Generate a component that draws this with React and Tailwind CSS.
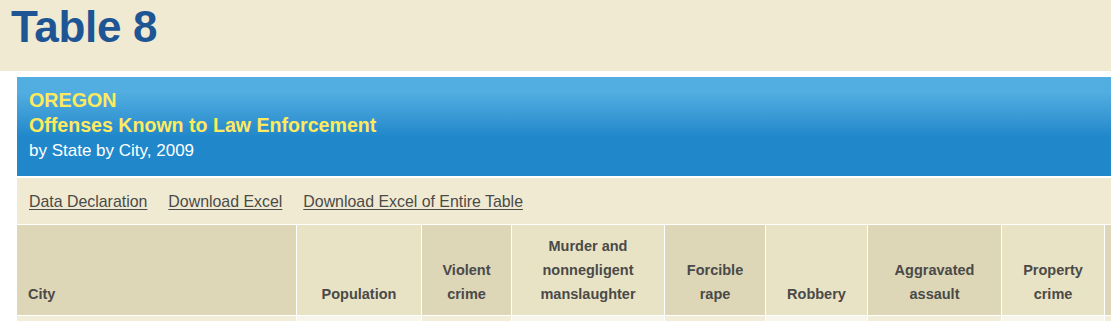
import React from "react";

// Column headings of the table, in order. "dark" = shaded column
const columns = [
  { key: "city", label: ["City"], width: "w-[279px]", dark: true, left: true },
  { key: "population", label: ["Population"], width: "w-[124px]", dark: false },
  { key: "violent", label: ["Violent", "crime"], width: "w-[89px]", dark: true },
  { key: "murder", label: ["Murder and", "nonnegligent", "manslaughter"], width: "w-[152px]", dark: false },
  { key: "rape", label: ["Forcible", "rape"], width: "w-[100px]", dark: true },
  { key: "robbery", label: ["Robbery"], width: "w-[101px]", dark: false },
  { key: "assault", label: ["Aggravated", "assault"], width: "w-[133px]", dark: true },
  { key: "property", label: ["Property", "crime"], width: "w-[102px]", dark: false },
  // next column only peeks in at the right edge
  { key: "more", label: [], width: "w-[100px]", dark: true },
];

const links = ["Data Declaration", "Download Excel", "Download Excel of Entire Table"];

const App = () => {
  return (
    <div className="h-screen w-full overflow-hidden bg-white font-['Liberation_Sans',Arial,sans-serif]">
      {/* page title band */}
      <div className="h-[71px] bg-[#f0ead3] pl-[11px] pt-[5px]">
        <h1 className="text-[44px] leading-[44px] font-bold tracking-[-0.3px] text-[#1e5594]">
          Table 8
        </h1>
      </div>

      <div className="pl-[17px] pt-[6px]">
        {/* blue caption */}
        <div className="bg-linear-to-b from-[#52aee1] from-15% to-[#2088ca] to-60% pl-[12px] pt-[11px] pb-[13px]">
          <div className="text-[19.7px] leading-[25px] font-bold text-[#ffea5e]">OREGON</div>
          <div className="text-[19.6px] leading-[25px] font-bold text-[#ffea5e]">
            Offenses Known to Law Enforcement
          </div>
          <div className="text-[17px] leading-[25px] text-white">by State by City, 2009</div>
        </div>

        {/* download links */}
        <div className="mt-[2px] h-[46px] bg-[#f0ead3] pl-[12px] pt-[14px] flex gap-[21px]">
          {links.map((l) => (
            <a
              key={l}
              href="#"
              className="text-[15.9px] leading-[20px] text-[#4a4a48] underline underline-offset-[2px]"
            >
              {l}
            </a>
          ))}
        </div>

        <div className="-ml-px overflow-hidden">
          <table className="table-fixed w-[1091px] border-separate border-spacing-px bg-white">
            <colgroup>
              {columns.map((c) => (
                <col key={c.key} className={c.width} />
              ))}
            </colgroup>
            <thead>
              <tr>
                {columns.map((c) => (
                  <th
                    key={c.key}
                    className={`h-[90px] align-bottom pb-[9px] pt-[9px] text-[14.5px] leading-[24px] font-bold text-[#4a4a48] ${
                      c.dark ? "bg-[#ddd6b7]" : "bg-[#e9e3c5]"
                    } ${c.left ? "text-left pl-[11px]" : "text-center"}`}
                  >
                    {c.label.map((line) => (
                      <div key={line}>{line}</div>
                    ))}
                  </th>
                ))}
              </tr>
            </thead>
            <tbody>
              <tr>
                {columns.map((c) => (
                  <td
                    key={c.key}
                    className={`h-[26px] ${c.dark ? "bg-[#f2edd9]" : "bg-[#f8f6eb]"}`}
                  />
                ))}
              </tr>
            </tbody>
          </table>
        </div>
      </div>
    </div>
  );
};

export default App;
